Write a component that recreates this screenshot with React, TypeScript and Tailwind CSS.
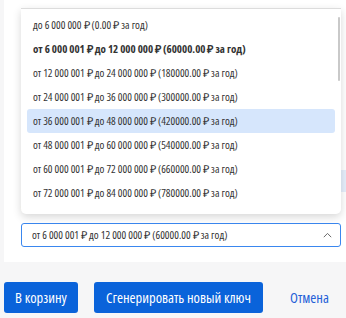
import React from "react";

const items = [
  "до 6 000 000 ₽ (0.00 ₽ за год)",
  "от 6 000 001 ₽ до 12 000 000 ₽ (60000.00 ₽ за год)",
  "от 12 000 001 ₽ до 24 000 000 ₽ (180000.00 ₽ за год)",
  "от 24 000 001 ₽ до 36 000 000 ₽ (300000.00 ₽ за год)",
  "от 36 000 001 ₽ до 48 000 000 ₽ (420000.00 ₽ за год)",
  "от 48 000 001 ₽ до 60 000 000 ₽ (540000.00 ₽ за год)",
  "от 60 000 001 ₽ до 72 000 000 ₽ (660000.00 ₽ за год)",
  "от 72 000 001 ₽ до 84 000 000 ₽ (780000.00 ₽ за год)",
];

const font: React.CSSProperties = { fontFamily: '"Open Sans", sans-serif', fontStretch: "75%" };

export default function App() {
  return (
    <div className="w-[346px] h-[318px] bg-[#f6f6f7] overflow-hidden" style={font}>
      <div className="relative ml-[4px] bg-white h-[262px] flex flex-col pl-[17px]">
        <div className="h-[170px]" />
        <div className="h-[22px] bg-[#e6effc]" />
        <div className="h-[8px]" />
        <div className="h-[23px] text-[11px] text-[#777] leading-[14px]">Оборот за год</div>
        <div className="mr-[5px] h-[24px] border border-[#3a87ef] rounded-[3px] flex items-center justify-between pl-[10px] pr-[8px] text-[11px] text-[#333]">
          <span>от 6 000 001 ₽ до 12 000 000 ₽ (60000.00 ₽ за год)</span>
          <svg width="9" height="6" viewBox="0 0 9 6" fill="none">
            <path d="M0.8 5.2 L4.5 1.4 L8.2 5.2" stroke="#6b6b6b" strokeWidth="1" />
          </svg>
        </div>

        <div className="absolute left-[17px] top-[8px] w-[320px] h-[206px] bg-white border-t border-[#dcdcdc] rounded-b-[5px] shadow-[0_3px_8px_rgba(0,0,0,0.16)] pt-[4px] px-[6px]">
          {items.map((t, i) => (
            <div
              key={i}
              className={
                "h-[24px] flex items-center pl-[6px] rounded-[3px] text-[11px] text-[#333] " +
                (i === 4 ? "bg-[#d6e6fc] " : "") +
                (i === 1 ? "font-bold text-[#222]" : "")
              }
            >
              {t}
            </div>
          ))}
          <div className="absolute right-[1px] top-[8px] w-[2px] h-[64px] bg-[#c9c9c9] rounded" />
        </div>
      </div>

      <div className="flex items-center ml-[4px] mt-[20px]">
        <button className="h-[31px] w-[74px] bg-[#0a63da] text-white rounded-[3px] text-[14.5px] flex items-center justify-center">
          В корзину
        </button>
        <button className="ml-[16px] h-[31px] w-[169px] bg-[#0a63da] text-white rounded-[3px] text-[14.5px] flex items-center justify-center">
          Сгенерировать новый ключ
        </button>
        <button className="ml-[27px] text-[14.5px] text-[#2360d8]">Отмена</button>
      </div>
    </div>
  );
}
